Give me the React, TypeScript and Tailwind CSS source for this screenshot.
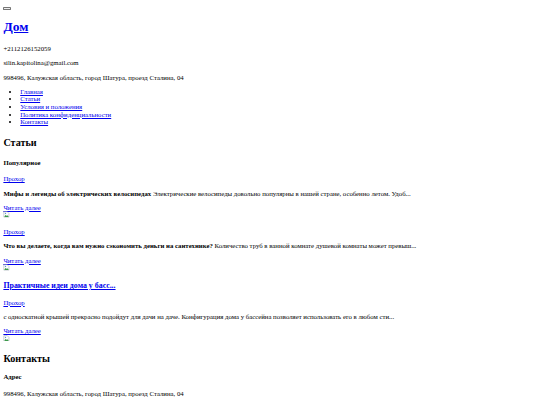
import React from "react";

const A = ({ children }: { children: React.ReactNode }) => (
  <a href="#" className="text-[#0000ee] underline">{children}</a>
);

const Broken = () => (
  <svg width="16" height="16" viewBox="0 0 16 16" className="inline-block align-baseline">
    <path d="M2 1.5h8l4 4v9H2z" fill="#fff" stroke="#9aa4ad" strokeWidth="1.2" />
    <path d="M3 14l3.5-5 2.5 3 2-2 2.5 4z" fill="#3c9a4a" />
    <circle cx="6" cy="5.5" r="1.5" fill="#4a86c8" />
  </svg>
);

const Article = ({ title, text, h3 }: { title?: string; text: string; h3?: string }) => (
  <div className="pb-[4px]">
    {h3 && (
      <h3 className="text-[18.72px] font-bold my-[18.72px]">
        <A>{h3}</A>
      </h3>
    )}
    <p className="my-[16px]">
      <A>Прохор</A>
    </p>
    <p className="my-[16px]">
      {title && <b>{title}</b>} {text}
    </p>
    <A>Читать далее</A>
    <br />
    <Broken />
  </div>
);

export default function App() {
  return (
    <div className="bg-white min-h-[405px] overflow-hidden">
      <div className="[zoom:0.421875] text-black p-[8px] pt-[1px] text-[16px] leading-[1.115] [font-family:'Liberation_Serif','Times_New_Roman',serif]">
        <button className="block mt-[15px] w-[17px] h-[8px] bg-[#efefef] border border-[#767676] rounded-[2px]"></button>
        <h1 className="text-[32px] font-bold mt-[21.44px] mb-[26px]">
          <A>Дом</A>
        </h1>
        <p className="my-[16px]">+2112126152059</p>
        <p className="my-[16px]">silin.kapitolina@gmail.com</p>
        <p className="my-[16px]">998496, Калужская область, город Шатура, проезд Сталина, 04</p>
        <ul className="list-disc pl-[40px] my-[16px]">
          <li><A>Главная</A></li>
          <li><A>Статьи</A></li>
          <li><A>Условия и положения</A></li>
          <li><A>Политика конфиденциальности</A></li>
          <li><A>Контакты</A></li>
        </ul>
        <h2 className="text-[24px] font-bold mt-[27px] mb-[19.92px]">Статьи</h2>
        <h4 className="font-bold mt-[25px] mb-[21.28px]">Популярное</h4>
        <Article
          title="Мифы и легенды об электрических велосипедах"
          text="Электрические велосипеды довольно популярны в нашей стране, особенно летом. Удоб..."
        />
        <Article
          title="Что вы делаете, когда вам нужно сэкономить деньги на сантехнике?"
          text="Количество труб в ванной комнате душевой комнаты может превыш..."
        />
        <Article
          h3="Практичные идеи дома у басс..."
          text="с односкатной крышей прекрасно подойдут для дачи на даче. Конфигурация дома у бассейна позволяет использовать его в любом сти..."
        />
        <h2 className="text-[24px] font-bold my-[19.92px]">Контакты</h2>
        <h4 className="font-bold my-[21.28px]">Адрес</h4>
        <p className="my-[16px]">998496, Калужская область, город Шатура, проезд Сталина, 04</p>
      </div>
    </div>
  );
}
